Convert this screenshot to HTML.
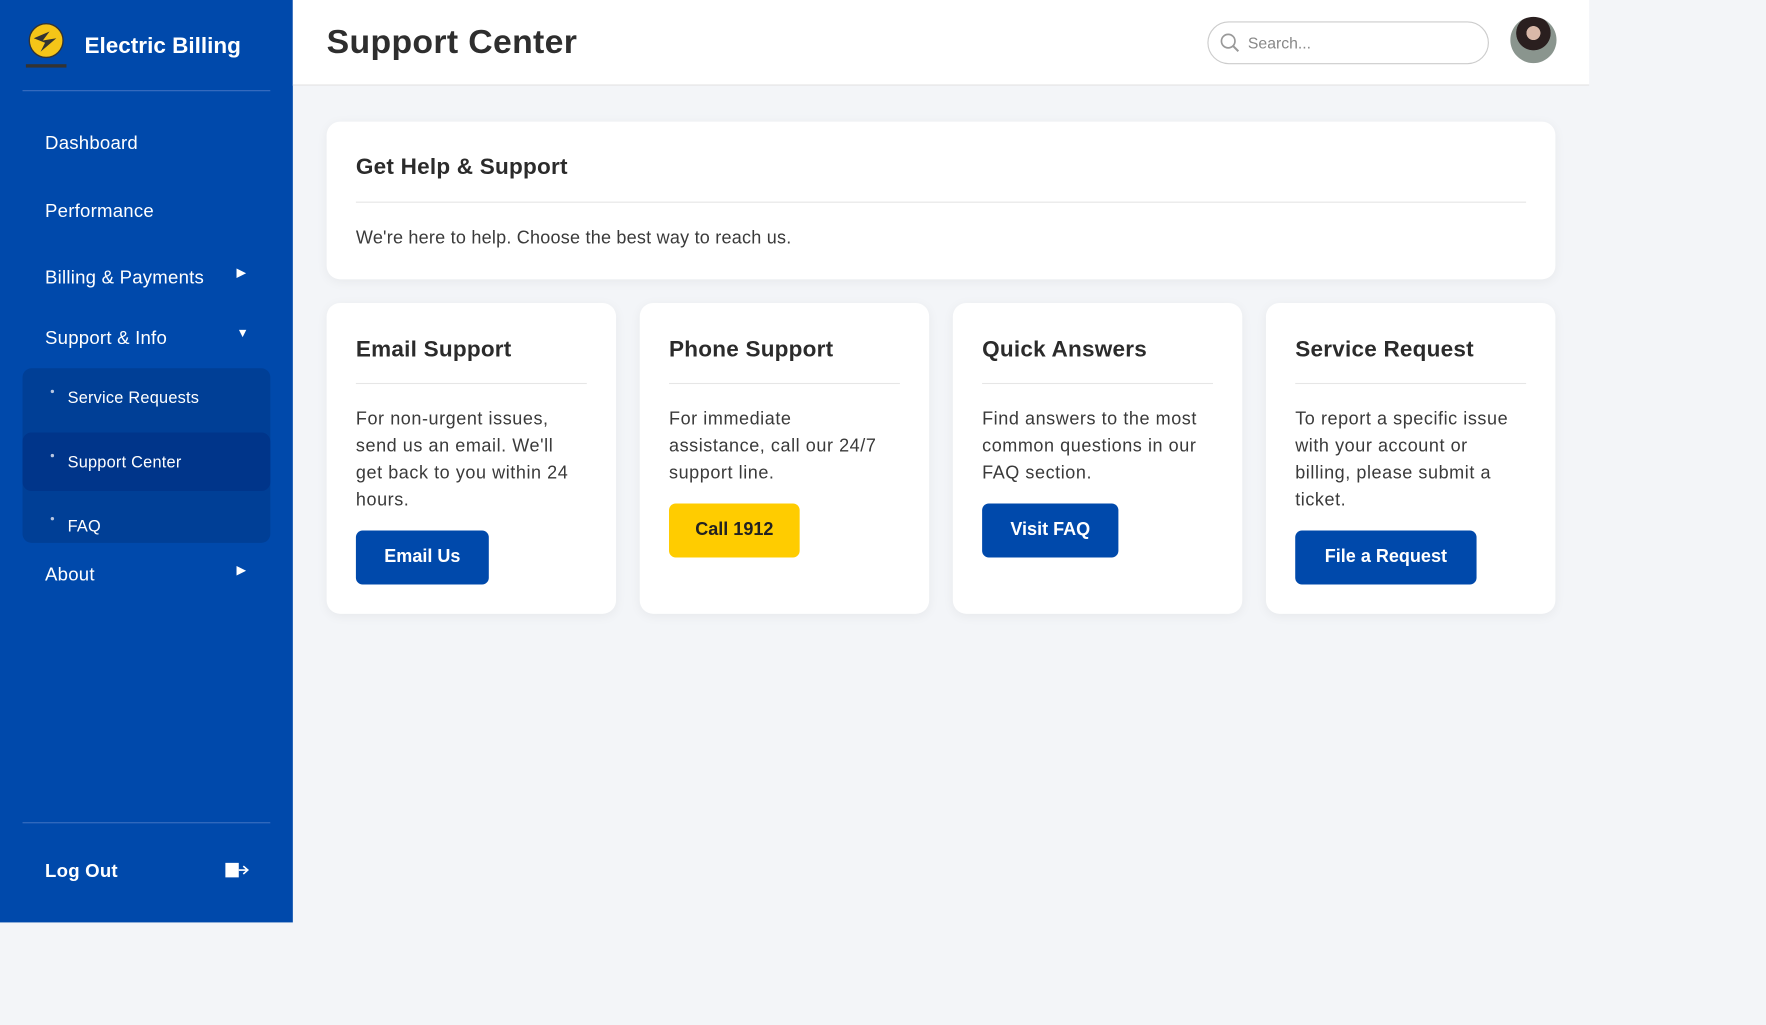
<!DOCTYPE html>
<html><head><meta charset="utf-8"><style>
*{box-sizing:border-box;margin:0;padding:0}
html,body{width:1766px;height:1025px;overflow:hidden;background:#f3f5f8;font-family:"Liberation Sans",sans-serif}
#w{position:absolute;left:0;top:0;width:1568px;height:910px;transform:scale(1.12628);transform-origin:0 0;background:#f3f5f8}
.a{position:absolute}
.sb{left:0;top:0;width:260px;height:819px;background:#0049ab;color:#fff}
.nav{position:absolute;left:40px;font-size:16.5px;color:#fff;transform:translateY(-50%);letter-spacing:.2px}
.arr{position:absolute;left:210px;font-size:11px;color:#fff;transform:translateY(-50%)}
.sub{position:absolute;left:60px;font-size:14.5px;color:#fff;transform:translateY(-50%);letter-spacing:.2px}
.dot{position:absolute;left:45px;width:3px;height:3px;border-radius:50%;background:#b8c6e0}
.card{position:absolute;background:#fff;border-radius:12px;box-shadow:0 2px 10px rgba(0,0,0,.05)}
.ct{position:absolute;left:26px;font-size:20px;font-weight:bold;color:#2b2b2b;transform:translateY(-50%);letter-spacing:.2px}
.hr{position:absolute;left:26px;right:26px;height:1px;background:#e6e6e6}
.tx{position:absolute;left:26px;width:206px;font-size:16px;line-height:24px;color:#3a3a3a;letter-spacing:.5px}
.btn{position:absolute;left:26px;height:48px;border-radius:6px;background:#0049ab;color:#fff;font-weight:bold;font-size:16px;display:flex;align-items:center;justify-content:center}
</style></head><body><div id="w">
<div class="a sb">
 <svg class="a" style="left:22px;top:20px" width="40" height="42" viewBox="0 0 40 42">
  <circle cx="19" cy="16" r="15" fill="#f5c518" stroke="#333" stroke-width="1.2"/>
  <path d="M8 14 L22 8 L16 16 L28 14 L14 26 L18 18 Z" fill="#333"/>
  <rect x="1" y="37" width="36" height="3" fill="#333"/>
 </svg>
 <div class="a" style="left:75px;top:30px;font-size:20px;font-weight:bold">Electric Billing</div>
 <div class="a" style="left:20px;top:80px;width:220px;height:1px;background:#3a6fc0"></div>
 <div class="nav" style="top:128px">Dashboard</div>
 <div class="nav" style="top:188px">Performance</div>
 <div class="nav" style="top:247px">Billing &amp; Payments</div><div class="arr" style="top:242px">▶</div>
 <div class="nav" style="top:301px">Support &amp; Info</div><div class="arr" style="top:296px">▼</div>
 <div class="a" style="left:20px;top:327px;width:220px;height:155px;background:#003f96;border-radius:8px"></div>
 <div class="a" style="left:20px;top:384px;width:220px;height:52px;background:#00358a;border-radius:8px"></div>
 <div class="dot" style="top:346px"></div><div class="sub" style="top:354px">Service Requests</div>
 <div class="dot" style="top:403px"></div><div class="sub" style="top:411px">Support Center</div>
 <div class="dot" style="top:459px"></div><div class="sub" style="top:468px">FAQ</div>
 <div class="nav" style="top:511px">About</div><div class="arr" style="top:506px">▶</div>
 <div class="a" style="left:20px;top:730px;width:220px;height:1px;background:#3a6fc0"></div>
 <div class="nav" style="top:774px;font-weight:bold">Log Out</div>
 <svg class="a" style="left:200px;top:766px" width="22" height="14" viewBox="0 0 22 14"><rect x="0" y="0" width="12" height="13" fill="#fff"/><path d="M12 6.5H20M16 3L20 6.5L16 10" stroke="#fff" stroke-width="1.4" fill="none"/></svg>
</div>
<div class="a" style="left:260px;top:0;width:1151px;height:76px;background:#fff;border-bottom:1px solid #e2e2e2"></div>
<div class="a" style="left:290px;top:21px;font-size:30px;font-weight:bold;color:#2e2e2e;letter-spacing:.3px">Support Center</div>
<div class="a" style="left:1072px;top:19px;width:250px;height:38px;border:1px solid #ccc;border-radius:19px"></div>
<svg class="a" style="left:1083px;top:29px" width="18" height="18" viewBox="0 0 18 18"><circle cx="7.5" cy="7.5" r="6" stroke="#999" stroke-width="1.5" fill="none"/><path d="M12 12L16.5 16.5" stroke="#999" stroke-width="1.8"/></svg>
<div class="a" style="left:1108px;top:30px;font-size:14px;color:#888">Search...</div>
<div class="a" style="left:1341px;top:15px;width:41px;height:41px;border-radius:50%;background:radial-gradient(circle at 50% 35%,#d9b8a8 0 18%,#2a1f1f 19% 45%,#8a958e 46%)"></div>

<div class="card" style="left:290px;top:108px;width:1091px;height:140px">
 <div class="ct" style="top:41px">Get Help &amp; Support</div>
 <div class="hr" style="top:71px"></div>
 <div class="tx" style="top:92px;width:auto;letter-spacing:.2px">We're here to help. Choose the best way to reach us.</div>
</div>

<div class="card" style="left:290px;top:269px;width:257px;height:276px">
 <div class="ct" style="top:42px">Email Support</div><div class="hr" style="top:71px"></div>
 <div class="tx" style="top:92px;width:198px">For non-urgent issues, send us an email. We'll get back to you within 24 hours.</div>
 <div class="btn" style="top:202px;width:118px">Email Us</div>
</div>
<div class="card" style="left:568px;top:269px;width:257px;height:276px">
 <div class="ct" style="top:42px">Phone Support</div><div class="hr" style="top:71px"></div>
 <div class="tx" style="top:92px;width:196px">For immediate assistance, call our 24/7 support line.</div>
 <div class="btn" style="top:178px;width:116px;background:#ffcc00;color:#222">Call 1912</div>
</div>
<div class="card" style="left:846px;top:269px;width:257px;height:276px">
 <div class="ct" style="top:42px">Quick Answers</div><div class="hr" style="top:71px"></div>
 <div class="tx" style="top:92px">Find answers to the most common questions in our FAQ section.</div>
 <div class="btn" style="top:178px;width:121px">Visit FAQ</div>
</div>
<div class="card" style="left:1124px;top:269px;width:257px;height:276px">
 <div class="ct" style="top:42px">Service Request</div><div class="hr" style="top:71px"></div>
 <div class="tx" style="top:92px">To report a specific issue with your account or billing, please submit a ticket.</div>
 <div class="btn" style="top:202px;width:161px">File a Request</div>
</div>
</div></body></html>
